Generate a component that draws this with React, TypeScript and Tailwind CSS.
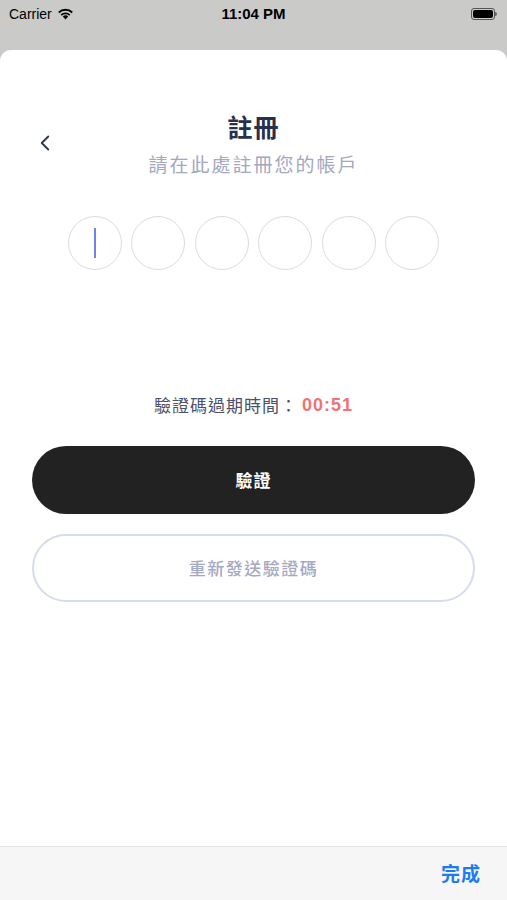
import { ChevronLeft } from 'lucide-react';

const font = '"Noto Sans CJK TC", "Noto Sans", sans-serif';

function StatusBar() {
  return (
    <div className="h-[50px] grid grid-cols-3 items-start px-[9px] pt-[4px]" style={{ fontFamily: '"Liberation Sans", sans-serif' }}>
      <div className="flex items-center gap-[5px] h-[20px] text-[14px] text-black">
        <span>Carrier</span>
        <svg width="17" height="12" viewBox="0 0 17 12">
          <path d="M8.5 11.5 L5.8 8.6 A3.9 3.9 0 0 1 11.2 8.6 Z" fill="#000" />
          <path d="M3.6 6.4 A7 7 0 0 1 13.4 6.4 L12.1 7.8 A5.1 5.1 0 0 0 4.9 7.8 Z" fill="#000" />
          <path d="M1.1 3.8 A10.6 10.6 0 0 1 15.9 3.8 L14.6 5.2 A8.7 8.7 0 0 0 2.4 5.2 Z" fill="#000" />
        </svg>
      </div>
      <div className="h-[20px] flex items-center justify-center text-[15px] font-bold text-black">11:04 PM</div>
      <div className="h-[20px] flex items-center justify-end pr-[1px]">
        <div className="w-[24px] h-[12px] rounded-[3px] border border-[#555] p-[1px]">
          <div className="w-full h-full rounded-[2px] bg-black" />
        </div>
        <div className="w-[2px] h-[4px] rounded-r-sm bg-[#666]" />
      </div>
    </div>
  );
}

export default function App() {
  return (
    <div className="w-[507px] h-[900px] bg-gradient-to-b from-[#cacbc9] to-[#bfc0be] flex flex-col overflow-hidden" style={{ fontFamily: font }}>
      <StatusBar />
      <div className="flex-1 bg-white rounded-t-[11px] flex flex-col">
        <div className="flex-1 flex flex-col">
          <div className="relative pt-[57px] flex flex-col items-center">
            <button className="absolute left-[32px] top-[80px] text-[#2a3550]">
              <ChevronLeft className="w-[26px] h-[26px]" strokeWidth={1.7} />
            </button>
            <h1 className="text-[25px] leading-[38px] font-bold tracking-[1px] text-[#27314d]">註冊</h1>
            <p className="mt-[5px] text-[19px] leading-[28px] tracking-[2px] text-[#a4a7c0]">請在此處註冊您的帳戶</p>
          </div>

          <div className="mt-[38px] flex justify-center gap-[9.6px]">
            {[0, 1, 2, 3, 4, 5].map(i => (
              <div key={i} className="w-[54px] h-[54px] rounded-full border border-[#dcdcdc] flex items-center justify-center">
                {i === 0 && <div className="w-[2px] h-[30px] bg-[#6f83e8]" />}
              </div>
            ))}
          </div>

          <div className="mt-[122px] flex justify-center items-center text-[17px] leading-[26px] tracking-[1px]">
            <span className="text-[#4b5168]">驗證碼過期時間：</span>
            <span className="ml-[4px] font-bold text-[#f07373] text-[18px]" style={{ fontFamily: '"Liberation Sans", sans-serif' }}>00:51</span>
          </div>

          <div className="mt-[28px] px-[32px] flex flex-col gap-[20px]">
            <button className="h-[68px] rounded-full bg-[#222222] text-white text-[17px] tracking-[1px] font-bold">驗證</button>
            <button className="h-[68px] rounded-full border-2 border-[#d6dcea] text-[#a5a8c3] text-[17px] tracking-[1.5px] font-medium">重新發送驗證碼</button>
          </div>
        </div>

        <div className="h-[54px] bg-[#f6f6f6] border-t border-[#e4e4e4] flex items-center justify-end pr-[26px]">
          <span className="text-[19px] tracking-[1px] font-bold text-[#1b7cf2]">完成</span>
        </div>
      </div>
    </div>
  );
}
